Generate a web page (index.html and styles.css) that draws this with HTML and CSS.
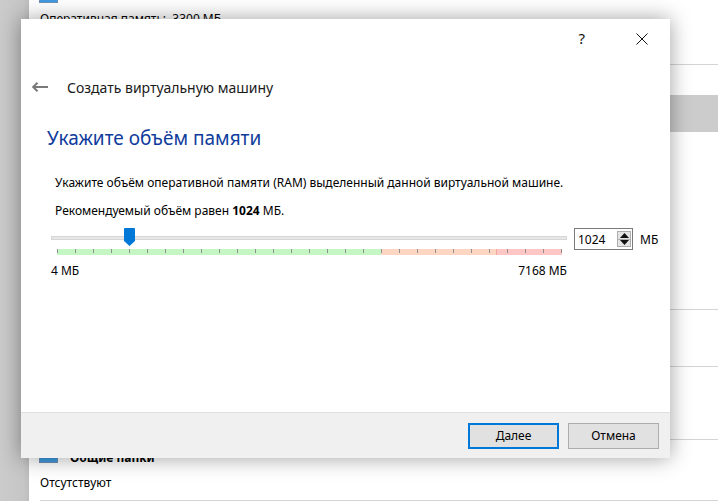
FILE: index.html
```html
<!DOCTYPE html>
<html lang="ru">
<head>
<meta charset="utf-8">
<title>Создать виртуальную машину</title>
<link rel="stylesheet" href="styles.css">
</head>
<body>
<div class="desktop">
  <aside class="strip"></aside>
  <main class="bgwin">
    <section class="bg-top">
      <span class="bg-icon bg-icon-cut"></span>
      <p class="bg-text">Оперативная память:&nbsp;&nbsp;3300 МБ</p>
    </section>
    <div class="bg-gap"></div>
    <div class="bg-band"></div>
    <div class="bg-row bg-r1"></div>
    <div class="bg-row bg-r2"></div>
    <div class="bg-row bg-r3"></div>
    <section class="bg-folders">
      <div class="bg-head"><span class="bg-icon"></span><b>Общие папки</b></div>
      <p class="bg-text2">Отсутствуют</p>
    </section>
  </main>

  <div class="dialog">
    <div class="titlebar">
      <span class="tb-help">?</span>
      <span class="tb-close">
        <svg width="12" height="12" viewBox="0 0 12 12"><path d="M0.5 0.5 L11.5 11.5 M11.5 0.5 L0.5 11.5" stroke="#111" stroke-width="1" fill="none"/></svg>
      </span>
    </div>
    <div class="wiz-head">
      <svg class="back" width="16" height="10" viewBox="0 0 16 10"><path d="M1 5 H16 M5.5 0.8 L1.2 5 L5.5 9.2" stroke="#7a7a7a" stroke-width="2" fill="none"/></svg>
      <span class="wiz-title">Создать виртуальную машину</span>
    </div>
    <div class="wiz-body">
      <h1 class="heading">Укажите объём памяти</h1>
      <p class="desc">Укажите объём оперативной памяти (RAM) выделенный данной виртуальной машине.</p>
      <p class="desc desc2">Рекомендуемый объём равен <b>1024</b> МБ.</p>
      <div class="mem-row">
        <div class="slider">
          <div class="groove"></div>
          <svg class="thumb" width="11" height="18" viewBox="0 0 11 18"><path d="M0 1 Q0 0 1 0 H10 Q11 0 11 1 V13 L5.5 18 L0 13 Z" fill="#0078d7"/></svg>
          <div class="scale"></div>
          <div class="limits"><span>4 МБ</span><span>7168 МБ</span></div>
        </div>
        <div class="spin">
          <span class="spin-val">1024</span>
          <span class="spin-btns">
            <span class="sb sb-up"><svg width="9" height="5" viewBox="0 0 9 5"><path d="M0 5 L4.5 0 L9 5 Z" fill="#111"/></svg></span>
            <span class="sb sb-down"><svg width="9" height="5" viewBox="0 0 9 5"><path d="M0 0 L4.5 5 L9 0 Z" fill="#111"/></svg></span>
          </span>
        </div>
        <span class="unit">МБ</span>
      </div>
    </div>
    <div class="footer">
      <button class="btn btn-default"><u>Д</u>алее</button>
      <button class="btn">Отмена</button>
    </div>
  </div>
</div>
</body>
</html>
```

FILE: styles.css
```css
* { box-sizing: border-box; }
html, body { margin: 0; padding: 0; }
body {
  width: 718px;
  height: 501px;
  overflow: hidden;
  background: #fff;
  font-family: "Noto Sans", "DejaVu Sans", sans-serif;
  color: #000;
}
.desktop {
  position: relative;
  width: 718px;
  height: 501px;
  display: flex;
}
.strip {
  width: 29px;
  flex: none;
  background: linear-gradient(to right, #cbcbcb, #c6c6c6 80%, #bdbdbd);
}
.bgwin {
  flex: 1;
  display: flex;
  flex-direction: column;
  background: #fff;
}
.bg-top {
  height: 65px;
  border-bottom: 1px solid #d4d4d4;
  padding-left: 10px;
  position: relative;
}
.bg-icon {
  display: inline-block;
  width: 19px;
  height: 11px;
  background: #3f9ae0;
  border: 1px solid #6f8fb5;
}
.bg-icon-cut { height: 3px; display: block; border-top: 0; }
.bg-text {
  margin: 7px 0 0 1px;
  font-size: 12px;
  color: #000;
}
.bg-gap { height: 30px; }
.bg-band { height: 37px; background: #cccccc; }
.bg-row { border-bottom: 1px solid #d4d4d4; }
.bg-r1 { height: 178px; }
.bg-r2 { height: 57px; }
.bg-r3 { height: 73px; }
.bg-folders { padding: 9px 0 0 10px; }
.bg-head { display: flex; align-items: center; gap: 12px; font-size: 12px; }
.bg-text2 {
  margin: 8px 0 0 1px;
  font-size: 12px;
  padding-bottom: 9px;
  border-bottom: 1px solid #d4d4d4;
}

/* dialog */
.dialog {
  position: absolute;
  left: 21px;
  top: 19px;
  width: 649px;
  height: 439px;
  background: #fff;
  box-shadow: 0 0 20px rgba(0,0,0,0.38);
  display: flex;
  flex-direction: column;
}
.titlebar {
  height: 40px;
  display: flex;
  justify-content: flex-end;
  align-items: center;
  padding-right: 22px;
}
.tb-help {
  font-size: 15px;
  font-family: "Noto Sans", sans-serif;
  color: #111;
  margin-right: 51px;
  line-height: 1;
  position: relative;
  top: -1px;
}
.tb-close { display: flex; }
.wiz-head {
  height: 54px;
  display: flex;
  align-items: center;
  padding-left: 11px;
  padding-top: 2px;
}
.back { margin-right: 19px; }
.wiz-title { font-size: 14px; color: #1a1a1a; }
.wiz-body { flex: 1; padding-left: 26px; }
.heading {
  margin: 12px 0 0 0;
  font-size: 19px;
  font-weight: 400;
  color: #0f3c9c;
  line-height: 26px;
}
.desc {
  margin: 24px 0 0 8px;
  font-size: 12px;
  line-height: 16px;
  color: #000;
}
.desc2 { margin-top: 12px; }
.mem-row {
  display: flex;
  align-items: flex-start;
  margin-top: 9px;
  margin-left: 4px;
}
.slider {
  width: 516px;
  position: relative;
  padding-top: 8px;
}
.groove {
  height: 4px;
  background: #e7e7e7;
  border: 1px solid #d6d6d6;
}
.thumb {
  position: absolute;
  left: 73px;
  top: 0;
}
.scale {
  margin: 9px 0 0 6px;
  width: 505px;
  height: 6px;
  background:
    repeating-linear-gradient(to right, #8f8f8f 0 1px, transparent 1px 18px) top left / 505px 4px no-repeat,
    linear-gradient(to right, #c4f7c4 0 324px, #fdd6c3 324px 439px, #f2a8a0 439px 440px, #ffc6c6 440px 505px);
}
.limits {
  display: flex;
  justify-content: space-between;
  font-size: 12px;
  margin-top: 7px;
}
.spin {
  margin-left: 7px;
  width: 59px;
  height: 22px;
  border: 1px solid #7a7a7a;
  display: flex;
  align-items: center;
  justify-content: space-between;
  padding: 0 1px 0 3px;
  font-size: 12px;
}
.spin-btns {
  display: flex;
  flex-direction: column;
  width: 14px;
  height: 16px;
  border: 1px solid #adadad;
  background: #e5e5e5;
}
.sb { flex: 1; display: flex; align-items: center; justify-content: center; }
.sb-up { border-bottom: 1px solid #adadad; }
.unit { font-size: 12px; margin: 3px 0 0 7px; }

.footer {
  height: 46px;
  background: #f0f0f0;
  border-top: 1px solid #dfdfdf;
  display: flex;
  justify-content: flex-end;
  align-items: center;
  gap: 9px;
  padding: 0 11px 0 0;
}
.btn {
  width: 91px;
  height: 26px;
  background: #e1e1e1;
  border: 1px solid #adadad;
  font-family: "Noto Sans", sans-serif;
  font-size: 12px;
  color: #000;
  padding: 0;
}
.btn-default { border: 2px solid #0078d7; }
```
